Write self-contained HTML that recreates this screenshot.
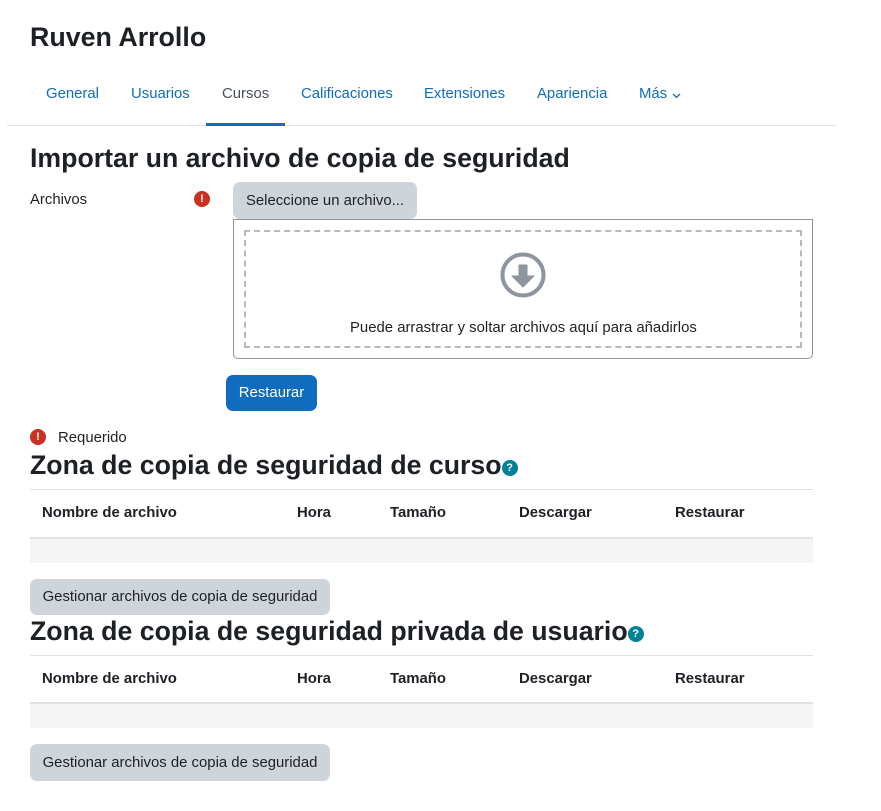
<!DOCTYPE html>
<html><head><meta charset="utf-8"><style>
*{box-sizing:border-box;margin:0;padding:0}
body{width:881px;height:811px;background:#fff;font-family:"Liberation Sans",sans-serif;color:#1d2125;position:relative;overflow:hidden;font-size:14.9px}
.a{position:absolute;white-space:nowrap}
h1{font-size:26.8px;font-weight:bold}
h2{font-size:26.7px;font-weight:bold}
.nav{color:#0f6cbf}
.btn{position:absolute;background:#ced4da;border-radius:7px;font-size:14.9px;color:#1d2125;display:flex;align-items:center;justify-content:center}
.err{position:absolute;width:16px;height:16px;border-radius:50%;background:#ca3120;color:#fff;font-size:11px;font-weight:bold;text-align:center;line-height:16px}
.help{display:inline-block;width:16px;height:16px;border-radius:50%;background:#008196;color:#fff;font-size:11px;font-weight:bold;text-align:center;line-height:16px;vertical-align:3px}
.th{position:absolute;font-weight:bold;font-size:14.9px}
.line{position:absolute;left:30px;width:783px}
</style></head><body>
<div class="a" style="left:30px;top:22px"><h1>Ruven Arrollo</h1></div>
<div class="a nav" style="left:46px;top:86px">General</div>
<div class="a nav" style="left:131px;top:86px">Usuarios</div>
<div class="a" style="left:222px;top:86px;color:#495057">Cursos</div>
<div class="a nav" style="left:301px;top:86px">Calificaciones</div>
<div class="a nav" style="left:424px;top:86px">Extensiones</div>
<div class="a nav" style="left:537px;top:86px">Apariencia</div>
<div class="a nav" style="left:639px;top:86px">Más</div>
<svg class="a" style="left:672px;top:93px" width="9" height="6" viewBox="0 0 9 6"><path d="M1 1l3.5 3.5L8 1" fill="none" stroke="#0f6cbf" stroke-width="1.3"/></svg>
<div class="a" style="left:7px;top:125px;width:829px;height:1px;background:#dee2e6"></div>
<div class="a" style="left:206px;top:123px;width:79px;height:3px;background:#0f6cbf"></div>
<div class="a" style="left:30px;top:143px"><h2>Importar un archivo de copia de seguridad</h2></div>
<div class="a" style="left:30px;top:192px">Archivos</div>
<div class="err" style="left:194px;top:191px">!</div>
<div class="btn" style="left:233px;top:182px;width:184px;height:37px">Seleccione un archivo...</div>
<div class="a" style="left:233px;top:219px;width:580px;height:140px;border:1px solid #8f959e;border-radius:0 0 5px 5px"></div>
<div class="a" style="left:244px;top:230px;width:558px;height:118px;border:2px dashed #b8b8b8"></div>
<svg class="a" style="left:500px;top:252px" width="46" height="46" viewBox="0 0 46 46"><circle cx="23" cy="23" r="20.5" fill="none" stroke="#8f959e" stroke-width="4"/><path d="M19 13h8v11h7l-11 11-11-11h7z" fill="#8f959e" stroke="#8f959e" stroke-width="1" stroke-linejoin="round"/></svg>
<div class="a" style="left:350px;top:320px">Puede arrastrar y soltar archivos aquí para añadirlos</div>
<div class="btn" style="left:226px;top:375px;width:91px;height:36px;background:#0f6cbf;color:#fff">Restaurar</div>
<div class="err" style="left:30px;top:429px">!</div>
<div class="a" style="left:58px;top:430px">Requerido</div>
<div class="a" style="left:30px;top:450px"><h2>Zona de copia de seguridad de curso<span class="help">?</span></h2></div>
<div class="line" style="top:489px;height:1px;background:#dee2e6"></div>
<div class="th" style="left:42px;top:505px">Nombre de archivo</div>
<div class="th" style="left:297px;top:505px">Hora</div>
<div class="th" style="left:390px;top:505px">Tamaño</div>
<div class="th" style="left:519px;top:505px">Descargar</div>
<div class="th" style="left:675px;top:505px">Restaurar</div>
<div class="line" style="top:537px;height:2px;background:#dee2e6"></div>
<div class="line" style="top:539px;height:24px;background:#f5f5f5"></div>
<div class="btn" style="left:30px;top:579px;width:300px;height:36px">Gestionar archivos de copia de seguridad</div>
<div class="a" style="left:30px;top:616px"><h2>Zona de copia de seguridad privada de usuario<span class="help">?</span></h2></div>
<div class="line" style="top:655px;height:1px;background:#dee2e6"></div>
<div class="th" style="left:42px;top:671px">Nombre de archivo</div>
<div class="th" style="left:297px;top:671px">Hora</div>
<div class="th" style="left:390px;top:671px">Tamaño</div>
<div class="th" style="left:519px;top:671px">Descargar</div>
<div class="th" style="left:675px;top:671px">Restaurar</div>
<div class="line" style="top:702px;height:2px;background:#dee2e6"></div>
<div class="line" style="top:704px;height:24px;background:#f5f5f5"></div>
<div class="btn" style="left:30px;top:744px;width:300px;height:37px">Gestionar archivos de copia de seguridad</div>
</body></html>
